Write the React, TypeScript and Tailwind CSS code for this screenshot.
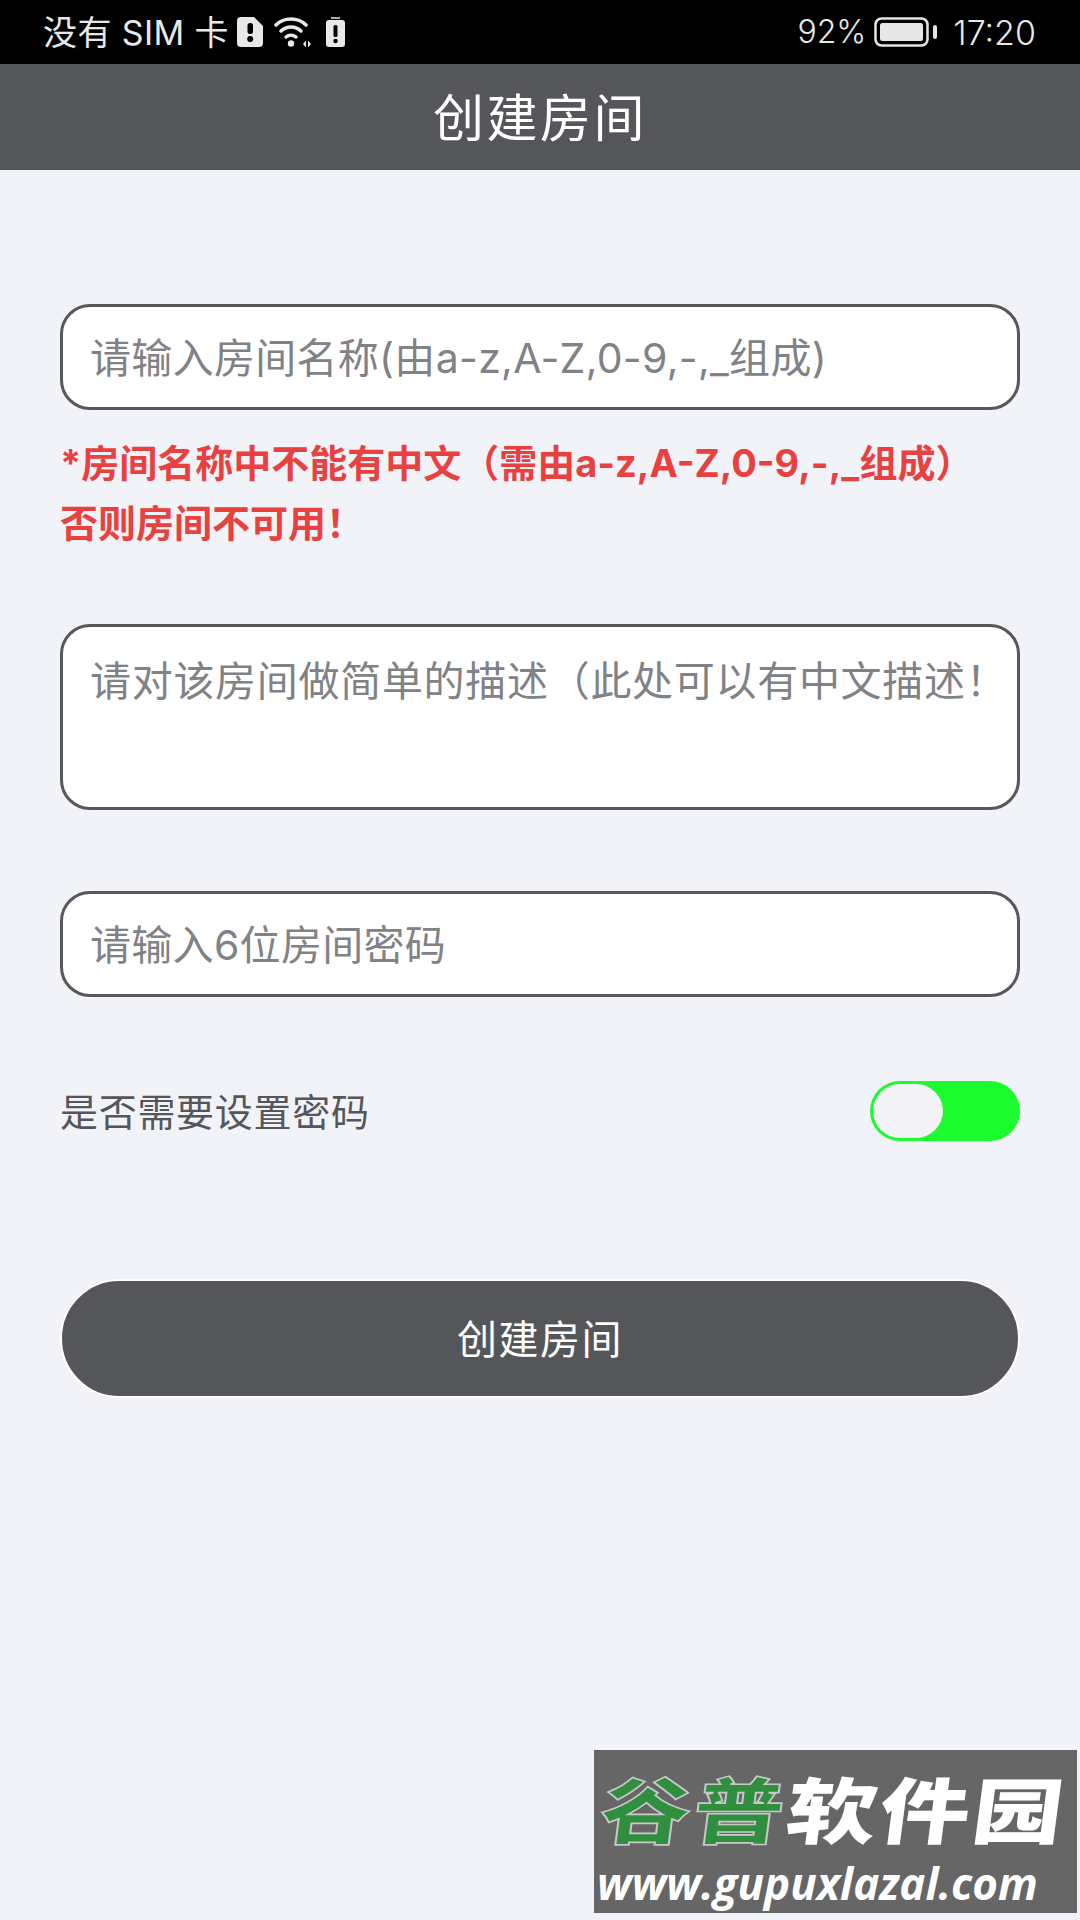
import React from 'react';

const FONT = "font-['Inter','Noto_Sans_CJK_SC',sans-serif]";

const SimAlertIcon = () => (
  <svg width="26" height="30" viewBox="0 0 26 30">
    <path d="M4 0h13l9 9v17a4 4 0 0 1-4 4H4a4 4 0 0 1-4-4V4a4 4 0 0 1 4-4z" fill="#e8e8e8" />
    <rect x="10.500" y="6" width="5.500" height="11" rx="2.500" fill="#000" />
    <circle cx="13.200" cy="22" r="3" fill="#000" />
  </svg>
);

const WifiIcon = () => (
  <svg width="38" height="30" viewBox="0 0 38 30" fill="none" stroke="#e8e8e8" strokeLinecap="round">
    <path d="M2 8C10 0 24 0 32 8" strokeWidth="3.500" />
    <path d="M7 14C12.500 8.500 21.500 8.500 27 14" strokeWidth="3.500" />
    <path d="M12 20C15 17.500 19 17.500 22 20" strokeWidth="3.500" />
    <circle cx="17" cy="26.500" r="3.200" fill="#e8e8e8" stroke="none" />
    <path d="M29 27l3-3.500v7zM34 23.500l3 3.500-3 3.500z" fill="#e8e8e8" stroke="none" />
  </svg>
);

const BatteryAlertIcon = () => (
  <svg width="19" height="30" viewBox="0 0 19 30">
    <rect x="5" y="0" width="9" height="2" fill="#aaa" />
    <rect x="0" y="3" width="19" height="27" rx="3" fill="#e8e8e8" />
    <rect x="7.500" y="8" width="4" height="12" rx="1.500" fill="#000" />
    <circle cx="9.500" cy="24" r="2.200" fill="#000" />
  </svg>
);

const BatteryIcon = () => (
  <svg width="64" height="30" viewBox="0 0 64 30" fill="none">
    <rect x="1.500" y="1.500" width="52" height="27" rx="6" stroke="#e4e4e4" strokeWidth="2.500" />
    <rect x="6" y="6" width="43" height="18" rx="2.500" fill="#e8e8e8" />
    <rect x="59" y="8" width="4" height="14" rx="2" fill="#e4e4e4" />
  </svg>
);

const StatusBar = () => (
  <div className="h-[64px] bg-black flex items-center justify-between pl-[43px] pr-[44px] text-[#e8e8e8] text-[34px]">
    <div className="flex items-center">
      <span className="mr-[8px] tracking-[0.4px]">没有 SIM 卡</span>
      <SimAlertIcon />
      <span className="ml-[11px] mr-[14px] flex"><WifiIcon /></span>
      <BatteryAlertIcon />
    </div>
    <div className="flex items-center">
      <span className="text-[32px] font-light">92%</span>
      <span className="ml-[8px] mr-[15px] flex"><BatteryIcon /></span>
      <span className="font-light">17:20</span>
    </div>
  </div>
);

const Field = ({ text, tall }: { text: string; tall?: boolean }) => (
  <div
    className={`bg-white border-[3px] border-[#57585b] rounded-[30px] pl-[27px] text-[#808285] text-[41px] whitespace-nowrap overflow-hidden ${
      tall ? 'h-[186px] pt-[24px] leading-[60px] tracking-[0.7px]' : 'h-[106px] pt-[4px] flex items-center tracking-[0.3px]'
    }`}
  >
    {text}
  </div>
);

const Watermark = () => (
  <div className="absolute left-[594px] top-[1750px] w-[483px] h-[163px] bg-[#666666] overflow-hidden">
    <div className="flex pl-[8px] pt-[8px] h-[108px] items-center font-black text-[90px] leading-none tracking-[3px] whitespace-nowrap scale-y-[0.8] -skew-x-6 [font-family:'Noto_Sans_CJK_SC',sans-serif]">
      <span className="text-[#2f8f3f] [-webkit-text-stroke:2px_#c8c8c8]">谷普</span>
      <span className="text-white">软件园</span>
    </div>
    <div className="pl-[3px] text-white italic font-bold text-[44px] leading-[50px] whitespace-nowrap [font-family:'Open_Sans',sans-serif]">
      www.gupuxlazal.com
    </div>
  </div>
);

export default function App() {
  return (
    <div className={`relative w-[1080px] h-[1920px] bg-[#f2f3f9] overflow-hidden ${FONT}`}>
      <StatusBar />
      <div className="h-[106px] pt-[5px] bg-[#55565a] flex items-center justify-center text-white text-[51px] tracking-[2.500px]">
        创建房间
      </div>

      <div className="px-[60px] pt-[134px]">
        <Field text="请输入房间名称(由a-z,A-Z,0-9,-,_组成)" />

        <div className="mt-[23px] text-[#e8413f] text-[38px] font-bold leading-[60px] whitespace-nowrap">
          <p>*房间名称中不能有中文（需由a-z,A-Z,0-9,-,_组成）</p>
          <p>否则房间不可用！</p>
        </div>

        <div className="mt-[71px]">
          <Field tall text="请对该房间做简单的描述（此处可以有中文描述！" />
        </div>

        <div className="mt-[81px]">
          <Field text="请输入6位房间密码" />
        </div>

        <div className="mt-[83px] flex items-center justify-between">
          <span className="pt-[4px] text-[#55565a] text-[38px] tracking-[0.7px]">是否需要设置密码</span>
          <div className="w-[150px] h-[60px] rounded-full bg-[#1bfb2e] p-[3px] flex">
            <div className="w-[70px] h-[54px] rounded-full bg-[#f3f3f8]" />
          </div>
        </div>

        <button className="mt-[138px] w-full h-[119px] pt-[2px] rounded-full bg-[#55565a] text-white text-[40px] tracking-[1.500px] border-2 border-white">
          创建房间
        </button>
      </div>

      <Watermark />
    </div>
  );
}
